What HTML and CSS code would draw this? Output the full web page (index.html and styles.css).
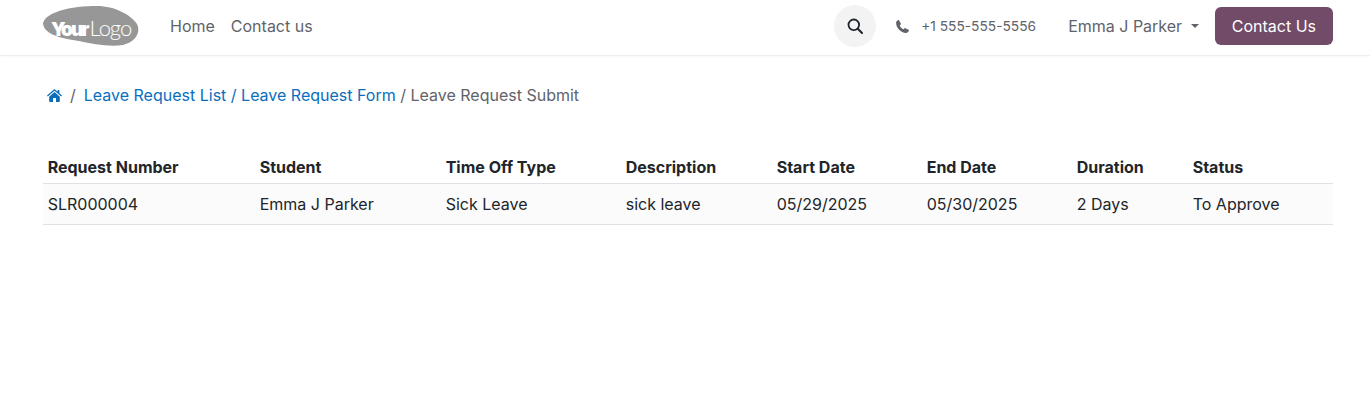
FILE: index.html
```html
<!DOCTYPE html>
<html lang="en">
<head>
    <title>Leave Request Submit</title>
    <link rel="stylesheet" href="styles.css">
</head>
<body>

<header class="navbar">
    <a class="logo" href="#">
        <svg class="logo-blob" width="96" height="40" viewBox="0 0 96 40">
            <path d="M0 17 C2 11 8 8 16 5 C28 1 42 0 54 0 C72 0 88 9 94 18 C98 26 93 36 80 39 C66 41 50 38 36 35 C24 33 10 31 3 24 C1 22 0 19 0 17 Z" fill="#979797"/>
        </svg>
        <span class="logo-text"><b>Your</b><span class="logo-thin">Logo</span></span>
    </a>
    <nav class="nav-links">
        <a href="#">Home</a>
        <a href="#">Contact us</a>
    </nav>
    <div class="nav-right">
        <button type="button" class="search-btn">
            <svg width="16" height="16" viewBox="0 0 16 16"><circle cx="6.8" cy="6.8" r="5.3" fill="none" stroke="#1f2430" stroke-width="1.8"/><path d="M10.8 10.8 L15 15" stroke="#1f2430" stroke-width="2" stroke-linecap="round"/></svg>
        </button>
        <span class="phone">
            <svg width="13" height="13" viewBox="0 0 13 13"><path d="M3.2 .4 L4.8 3.6 C5 4 4.9 4.3 4.6 4.6 L3.7 5.5 C4.4 7.2 5.8 8.6 7.5 9.3 L8.4 8.4 C8.7 8.1 9 8 9.4 8.2 L12.6 9.8 C12.9 10 13 10.3 12.9 10.6 C12.5 12 11.4 12.9 10 12.9 C4.9 12.7 .3 8.1 .1 3 C.1 1.6 1 .5 2.4 .1 C2.7 0 3 .1 3.2 .4 Z" fill="#5f636a"/></svg>
            <span>+1 555-555-5556</span>
        </span>
        <a class="user-menu" href="#">Emma J Parker<i class="caret"></i></a>
        <a class="contact-btn" href="#">Contact Us</a>
    </div>
</header>

<main class="content">
    <div class="breadcrumb">
        <a href="#" class="home-icon">
            <svg width="15" height="13" viewBox="0 0 15 13"><path d="M7.5 0 L10.6 2.7 V1 H12.4 V4.3 L15 6.6 L14.2 7.5 L7.5 1.7 L.8 7.5 L0 6.6 Z M2.2 7.7 L7.5 3.1 L12.8 7.7 V12.2 C12.8 12.6 12.5 13 12.1 13 H9 V9 H6 V13 H2.9 C2.5 13 2.2 12.6 2.2 12.2 Z" fill="#0a6ebd"/></svg>
        </a>
        <span class="sep">/</span>
        <a href="#">Leave Request List / Leave Request Form</a>
        <span class="current">/ Leave Request Submit</span>
    </div>

    <table class="request-table">
        <colgroup>
            <col class="col-number">
            <col class="col-student">
            <col class="col-type">
            <col class="col-desc">
            <col class="col-date">
            <col class="col-date">
            <col class="col-duration">
            <col class="col-status">
        </colgroup>
        <thead>
            <tr>
                <th>Request Number</th>
                <th>Student</th>
                <th>Time Off Type</th>
                <th>Description</th>
                <th>Start Date</th>
                <th>End Date</th>
                <th>Duration</th>
                <th>Status</th>
            </tr>
        </thead>
        <tbody>
            <tr>
                <td>SLR000004</td>
                <td>Emma J Parker</td>
                <td>Sick Leave</td>
                <td>sick leave</td>
                <td>05/29/2025</td>
                <td>05/30/2025</td>
                <td>2 Days</td>
                <td>To Approve</td>
            </tr>
        </tbody>
    </table>
</main>

</body>
</html>
```

FILE: styles.css
```css
body {
  margin: 0;
  font-family: "Inter", sans-serif;
  font-size: 16px;
  line-height: 24px;
  color: #212529;
  background: #fff;
}
a {
  text-decoration: none;
}
.navbar {
  display: flex;
  align-items: center;
  height: 52px;
  padding: 0 37px 3px 43px;
  border-bottom: 1px solid #eee;
  box-shadow: 0 1px 2px rgba(0, 0, 0, 0.03);
}
.logo {
  position: relative;
  display: block;
  width: 96px;
  height: 40px;
}
.logo-blob {
  display: block;
}
.logo-text {
  position: absolute;
  left: 8px;
  top: 10px;
  display: flex;
  align-items: baseline;
  color: #fff;
}
.logo-text b {
  font-size: 19px;
  font-weight: 900;
  letter-spacing: -2px;
}
.logo-thin {
  margin-left: 2px;
  font-family: "Lato", sans-serif;
  font-size: 22px;
  font-weight: 300;
  letter-spacing: -1px;
}
.nav-links {
  display: flex;
  gap: 16px;
  margin-left: 31px;
}
.nav-links a {
  color: #5f636a;
}
.nav-right {
  display: flex;
  align-items: center;
  margin-left: auto;
}
.search-btn {
  display: flex;
  align-items: center;
  justify-content: center;
  width: 42px;
  height: 42px;
  padding: 0;
  border: 0;
  border-radius: 50%;
  background: #f3f3f3;
}
.phone {
  display: flex;
  align-items: center;
  gap: 12px;
  margin-left: 20px;
  font-size: 13.75px;
  color: #5f636a;
}
.user-menu {
  display: flex;
  align-items: center;
  margin-left: 32px;
  color: #5f636a;
}
.caret {
  width: 0;
  height: 0;
  margin-left: 8.6px;
  border-top: 4px solid #5f636a;
  border-left: 4px solid transparent;
  border-right: 4px solid transparent;
}
.contact-btn {
  margin-left: 16px;
  padding: 7px 17px;
  border-radius: 6px;
  background: #714b67;
  color: #fff;
}
.content {
  padding: 0 37px 0 43px;
}
.breadcrumb {
  display: flex;
  align-items: center;
  gap: 5px;
  padding: 27px 0 0 4px;
  color: #5f636a;
}
.breadcrumb a {
  color: #0a6ebd;
}
.home-icon {
  display: flex;
}
.sep {
  margin: 0 3px;
}
.current {
  margin-left: -0.5px;
}
.request-table {
  width: 1290px;
  margin-top: 40px;
  border-collapse: collapse;
  table-layout: fixed;
}
.request-table th,
.request-table td {
  padding: 8px 5px 8px 4.7px;
  text-align: left;
}
.request-table th {
  padding-bottom: 4px;
  font-weight: 700;
  border-bottom: 1px solid #dee2e6;
}
.request-table td {
  background: #fbfbfb;
  border-bottom: 1px solid #dee2e6;
}
.col-number { width: 212px; }
.col-student { width: 186px; }
.col-type { width: 180px; }
.col-desc { width: 151px; }
.col-date { width: 150px; }
.col-duration { width: 116px; }
.col-status { width: 145px; }
```
